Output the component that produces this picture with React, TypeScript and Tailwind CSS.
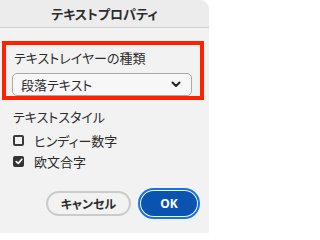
import React from "react";

export default function App() {
  return (
    <div className="w-[209px] h-[233px] bg-white overflow-hidden [font-feature-settings:'palt']" style={{ fontFamily: '"Noto Sans CJK JP", "Noto Sans", sans-serif' }}>
      <div className="w-[209px] h-[233px] bg-[#f2f2f2] rounded-tr-[9px] flex flex-col text-[#2c2c2c]">
        <div className="h-[28px] shrink-0 border-b border-[#cfcfcf] bg-[#ececec] rounded-tr-[9px] flex items-center justify-center text-[13px] font-bold leading-none">
          テキストプロパティ
        </div>
        <div className="ml-[2px] mt-[13px] w-[202px] h-[59px] border-[4px] border-[#ff2200] flex flex-col">
          <div className="pl-[8px] pt-[4px] text-[13px] leading-[18px]">テキストレイヤーの種類</div>
          <div className="ml-[6px] mt-[6px] w-[180px] h-[24px] border border-[#a9a9a9] rounded-[5px] bg-[#f7f7f7] flex items-center justify-between pl-[8px] pr-[10px]">
            <span className="text-[13px] leading-none">段落テキスト</span>
            <svg width="10" height="7" viewBox="0 0 10 7">
              <path d="M1.5 1.5 L5 5 L8.5 1.5" fill="none" stroke="#222" strokeWidth="2" strokeLinecap="round" strokeLinejoin="round" />
            </svg>
          </div>
        </div>
        <div className="pl-[13px] mt-[8px] text-[13px] leading-[18px]">テキストスタイル</div>
        <div className="pl-[13px] mt-[7px] flex items-center gap-[10px] h-[14px]">
          <div className="w-[11px] h-[11px] border-[2px] border-[#3a3a3a] rounded-[2px]" />
          <span className="text-[13px] leading-none">ヒンディー数字</span>
        </div>
        <div className="pl-[13px] mt-[7px] flex items-center gap-[10px] h-[14px]">
          <div className="w-[11px] h-[11px] bg-[#333] rounded-[2px] flex items-center justify-center">
            <svg width="8" height="7" viewBox="0 0 8 7">
              <path d="M1.2 3.6 L3.2 5.4 L6.8 1.4" fill="none" stroke="#fff" strokeWidth="1.6" strokeLinecap="round" strokeLinejoin="round" />
            </svg>
          </div>
          <span className="text-[13px] leading-none">欧文合字</span>
        </div>
        <div className="mt-[20px] pl-[46px] flex items-center gap-[7px]">
          <div className="w-[85px] h-[25px] rounded-full border-[2px] border-[#cbcbcb] flex items-center justify-center text-[12px] font-bold leading-none">
            キャンセル
          </div>
          <div className="w-[62px] h-[31px] rounded-full border-[2px] border-[#1473e6] p-[1px] flex">
            <div className="flex-1 rounded-full bg-[#0a53b0] flex items-center justify-center text-white text-[12px] font-bold leading-none" style={{ fontFamily: '"Noto Sans", sans-serif' }}>
              OK
            </div>
          </div>
        </div>
      </div>
    </div>
  );
}
